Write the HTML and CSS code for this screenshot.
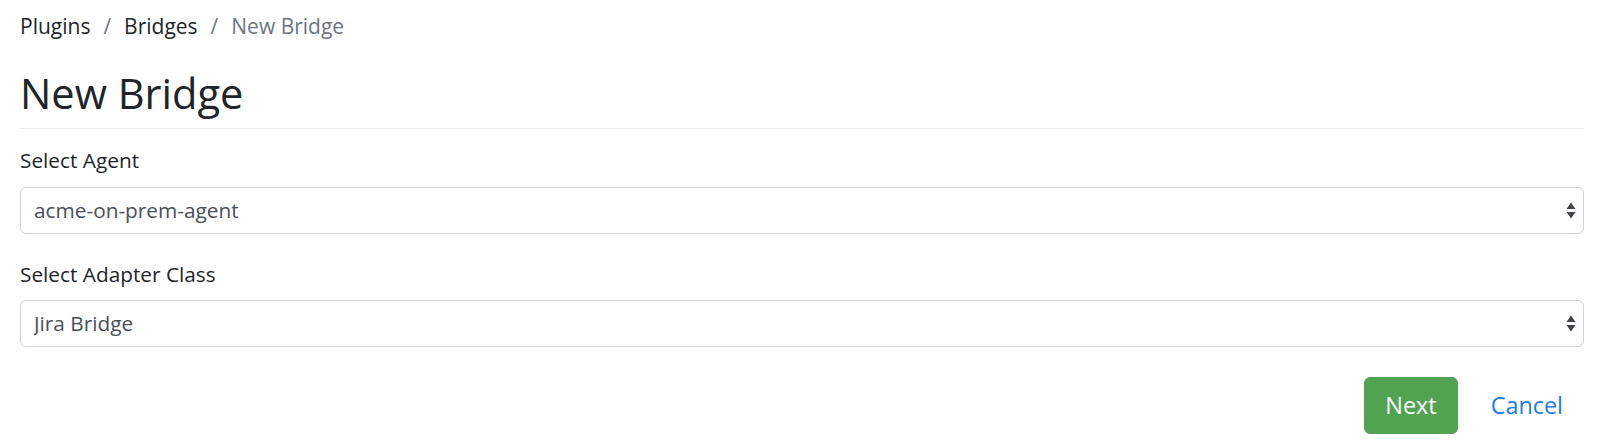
FILE: index.html
```html
<!DOCTYPE html>
<html>
<head>
<meta charset="utf-8">
<link rel="stylesheet" href="styles.css">
</head>
<body>
<div class="page">
  <nav class="breadcrumb">
    <a class="crumb" href="#">Plugins</a>
    <span class="sep">/</span>
    <a class="crumb" href="#">Bridges</a>
    <span class="sep">/</span>
    <span class="crumb active">New Bridge</span>
  </nav>
  <h1 class="title">New Bridge</h1>
  <form class="form">
    <div class="field">
      <label class="label">Select Agent</label>
      <div class="select-wrap">
        <select class="select"><option>acme-on-prem-agent</option></select>
        <svg class="arrows" width="10" height="17" viewBox="0 0 10 17"><path d="M5 0.5 L9.5 7 H0.5 Z M5 16.5 L9.5 10 H0.5 Z" fill="#3f444a"/></svg>
      </div>
    </div>
    <div class="field">
      <label class="label">Select Adapter Class</label>
      <div class="select-wrap">
        <select class="select"><option>Jira Bridge</option></select>
        <svg class="arrows" width="10" height="17" viewBox="0 0 10 17"><path d="M5 0.5 L9.5 7 H0.5 Z M5 16.5 L9.5 10 H0.5 Z" fill="#3f444a"/></svg>
      </div>
    </div>
    <div class="actions">
      <button type="button" class="btn btn-next">Next</button>
      <a class="btn btn-link" href="#">Cancel</a>
    </div>
  </form>
</div>
</body>
</html>
```
FILE: styles.css
```css
* { box-sizing: border-box; }
html, body { margin: 0; background: #fff; }
body {
  font-family: "Open Sans", "Noto Sans", sans-serif;
  color: #212529;
  font-size: 20.8px;
  line-height: 1.5;
}
.page {
  padding: 11px 16px 0 20px;
}
.breadcrumb {
  display: flex;
  align-items: center;
  gap: 13px;
  font-size: 21px;
}
.crumb { color: #212529; text-decoration: none; }
.crumb.active { color: #6c757d; }
.sep { color: #6c757d; }
.title {
  font-size: 41.6px;
  font-weight: 400;
  line-height: 1.2;
  margin: 26px 0 0;
  padding-bottom: 10px;
  border-bottom: 1px solid #e9ecef;
}
.form { margin-top: 16px; }
.field { margin-bottom: 25px; }
.label { display: block; margin-bottom: 10px; }
.select-wrap { position: relative; }
.select {
  display: block;
  width: 100%;
  height: 47px;
  -webkit-appearance: none;
  appearance: none;
  font-family: inherit;
  font-size: 20.8px;
  color: #495057;
  background: #fff;
  border: 1px solid #ced4da;
  border-radius: 6px;
  padding: 0 40px 0 13px;
}
.arrows {
  position: absolute;
  right: 8px;
  top: 50%;
  margin-top: -8px;
}
.actions {
  display: flex;
  justify-content: flex-end;
  align-items: center;
  gap: 12px;
  margin-top: 30px;
}
.btn {
  font-family: inherit;
  font-size: 23.4px;
  line-height: 1.5;
  border-radius: 6px;
  padding: 10px 20px;
  border: 1px solid transparent;
  text-decoration: none;
}
.btn-next {
  background: #51a351;
  color: #fff;
  border-color: #51a351;
}
.btn-link { color: #1a7cfa; }
```
